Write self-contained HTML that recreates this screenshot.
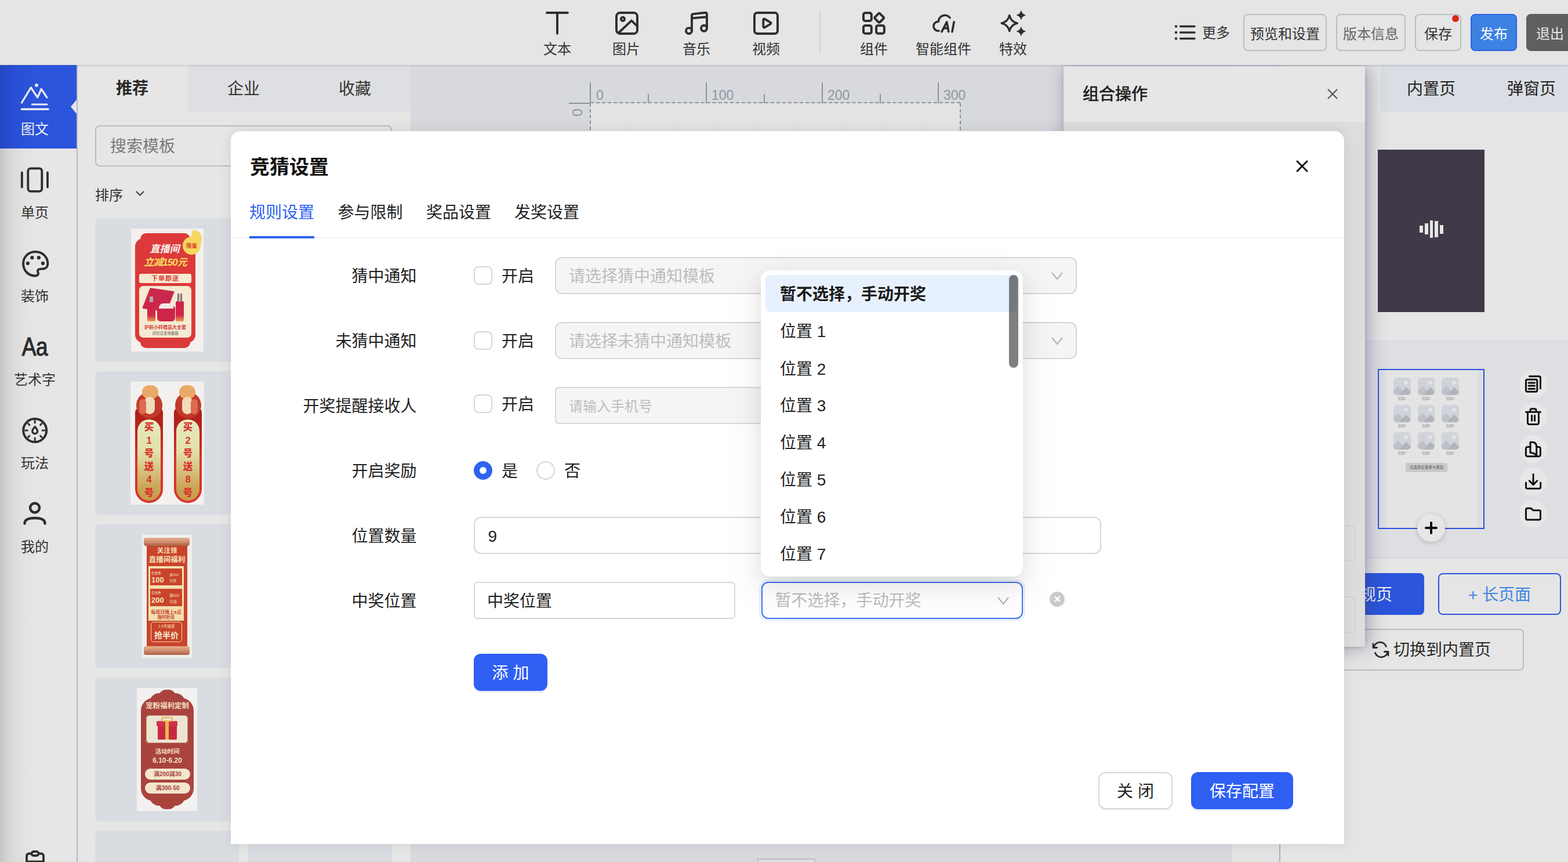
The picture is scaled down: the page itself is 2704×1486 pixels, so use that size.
<!DOCTYPE html><html lang="zh-CN"><head>
<meta charset="utf-8">
<title>竞猜设置</title>
<style>
*{box-sizing:border-box;margin:0;padding:0}
html,body{width:2704px;height:1486px;overflow:hidden;background:#e5e5e5}
body{position:relative;font-family:"Liberation Sans","Noto Sans CJK SC",sans-serif;color:#333;font-size:24px}
.a{position:absolute;white-space:nowrap}
.c{text-align:center}
svg{position:absolute;overflow:visible}
.ic{fill:none;stroke:#2e2e2e;stroke-width:3.9;stroke-linecap:round;stroke-linejoin:round}

/* ---------- top bar ---------- */
#top{left:0;top:0;width:2704px;height:112px;background:#e5e5e5;z-index:5;box-shadow:0 1px 3px rgba(90,100,120,.32)}
.tl{top:69px;width:160px;height:32px;line-height:32px;font-size:24px;color:#333;text-align:center}
.tb{top:24px;height:64px;line-height:66px;border:2px solid #b9bec6;border-radius:8px;font-size:24px;text-align:center;color:#333}

/* ---------- sidebar ---------- */
#side{left:0;top:112px;width:132px;height:1374px;background:linear-gradient(90deg,#c6c6c6 0,#d3d3d3 12px,#dddddd 28px,#e3e3e3 46px,#e6e6e6 66px)}
#sideline{left:132px;top:112px;width:2px;height:1374px;background:#b3b8c2}
.sl{left:0;width:120px;height:32px;line-height:32px;margin-top:1px;font-size:24px;text-align:center;color:#333}

/* ---------- template panel ---------- */
#tpl{left:134px;top:112px;width:574px;height:1374px;background:#e6e6e6}
.card{width:248px;height:248px;background:#d9dde2;border-radius:7px}

/* ---------- canvas ---------- */
#cv{left:708px;top:112px;width:1646px;height:1374px;background:#d8d9de}

/* ---------- right panel ---------- */
#rp{left:2354px;top:112px;width:350px;height:1374px;background:#e5e5e5}
.rb{width:48px;height:48px;border-radius:24px;background:#e7e7e7}
.ri{fill:none;stroke:#111;stroke-width:3;stroke-linecap:round;stroke-linejoin:round}

/* ---------- modal ---------- */
#modal{left:398px;top:226px;width:1920px;height:1229px;background:#fff;border-radius:16px 16px 0 0;z-index:20;
 box-shadow:0 -1px 26px rgba(0,0,0,.075),0 0 8px rgba(0,0,0,.03)}
.lb{left:0;width:320px;height:40px;line-height:40px;text-align:right;font-size:28px;color:#1f1f1f;margin-top:1.500px;margin-left:.5px}
.t28{font-size:28px;height:40px;line-height:40px;color:#1f1f1f;margin-top:1.500px}
.cb{width:32px;height:32px;border:2px solid #d6d6d6;border-radius:8px;background:#fff}
.sel{height:63px;border:2px solid #d7d7d7;border-radius:12px;background:#f5f5f5}
.ph{font-size:28px;height:40px;line-height:40px;color:#bdbdbd;margin-top:1.500px}
.chev{fill:none;stroke:#b4b4b4;stroke-width:2.2;stroke-linecap:butt;stroke-linejoin:miter}

/* ---------- dropdown ---------- */
#dd{left:1312px;top:466px;width:452px;height:528px;background:#fff;border-radius:16px;z-index:30;
 box-shadow:0 12px 32px 0 rgba(0,0,0,.08),0 6px 12px -8px rgba(0,0,0,.12),0 18px 56px 16px rgba(0,0,0,.05)}
.di{left:33px;height:40px;line-height:40px;font-size:28px;color:#1f1f1f;margin-top:2px}
</style>
</head>
<body>

<!-- ================= TOP BAR ================= -->
<div id="top" class="a">
  <!-- 文本 -->
  <svg class="ic" style="left:941px;top:20px" width="40" height="40" viewBox="0 0 40 40"><path d="M2 2h36M20 2v35.800"></path></svg>
  <div class="a tl" style="left: 881px; color: rgb(51,51,51);">文本</div>
  <!-- 图片 -->
  <svg class="ic" style="left:1061px;top:20px" width="40" height="40" viewBox="0 0 40 40"><rect x="2" y="2" width="36" height="36" rx="6"></rect><circle cx="13" cy="12.900" r="3.100"></circle><path d="M5.800 36.500L28 15.600l10 9.600"></path></svg>
  <div class="a tl" style="left: 1000px; color: rgb(51,51,51);">图片</div>
  <!-- 音乐 -->
  <svg class="ic" style="left:1181px;top:20px" width="40" height="40" viewBox="0 0 40 40"><path d="M12 33V6.700a2.600 2.600 0 0 1 2.300-2.600L35.300 1.800A2.500 2.500 0 0 1 38 4.300V28.800M12.500 11.400L37.500 9.300"></path><circle cx="7" cy="33.100" r="5"></circle><circle cx="33" cy="28.800" r="5"></circle></svg>
  <div class="a tl" style="left: 1121px; color: rgb(51,51,51);">音乐</div>
  <!-- 视频 -->
  <svg class="ic" style="left:1299px;top:20px" width="44" height="40" viewBox="0 0 44 40"><rect x="2" y="2" width="40" height="36" rx="5"></rect><path d="M17.300 14.200a1.600 1.600 0 0 1 2.400-1.400l10 5.800a1.600 1.600 0 0 1 0 2.800l-10 5.800a1.600 1.600 0 0 1-2.400-1.400z"></path></svg>
  <div class="a tl" style="left: 1241px; color: rgb(51,51,51);">视频</div>
  <div class="a" style="left:1413px;top:20px;width:2px;height:72px;background:#d2d2d2"></div>
  <!-- 组件 -->
  <svg class="ic" style="left:1487px;top:20px;stroke-width:4" width="40" height="40" viewBox="0 0 40 40"><rect x="2" y="2.200" width="13.800" height="13.800" rx="3"></rect><rect x="2" y="24" width="13.800" height="13.800" rx="3"></rect><rect x="24.100" y="24" width="13.800" height="13.800" rx="3"></rect><path d="M27.800 3.600a2 2 0 0 1 2.800 0l5.800 5.800a2 2 0 0 1 0 2.800l-5.800 5.800a2 2 0 0 1-2.800 0l-5.800-5.800a2 2 0 0 1 0-2.800z"></path></svg>
  <div class="a tl" style="left: 1427px; color: rgb(51,51,51);">组件</div>
  <!-- 智能组件 -->
  <svg class="ic" style="left:1607px;top:20px;stroke-width:3.600" width="42" height="40" viewBox="0 0 42 40"><path d="M12 33.200h-1.600a8 8 0 0 1 1-16A11 11 0 0 1 31 10.500"></path><path d="M17 34.700l8.700-16.800 3.100 16.800M20.500 28.600h7.300M38.200 17.900L35 34.700"></path></svg>
  <div class="a tl" style="left: 1547px; color: rgb(51,51,51);">智能组件</div>
  <!-- 特效 -->
  <svg style="left:1726px;top:18px" width="44" height="44" viewBox="0 0 44 44"><path d="M14.800 8.400Q17.300 19.500 28.400 22 17.300 24.500 14.800 35.600 12.300 24.500 1.200 22 12.300 19.500 14.800 8.400z" fill="none" stroke="#2e2e2e" stroke-width="3.400" stroke-linejoin="round"></path><path d="M34.900 .7Q36.500 6.500 42.300 8.100 36.500 9.700 34.900 15.500 33.300 9.700 27.500 8.100 33.300 6.500 34.900 .7zM34.900 28.700Q36.500 34.500 42.300 36.100 36.500 37.700 34.900 43.500 33.300 37.700 27.500 36.100 33.300 34.500 34.900 28.700z" fill="#2e2e2e" stroke="#2e2e2e" stroke-width="1" stroke-linejoin="round"></path></svg>
  <div class="a tl" style="left: 1667px; color: rgb(51,51,51);">特效</div>
  <!-- 更多 -->
  <svg style="left:2026px;top:43px" width="36" height="26" viewBox="0 0 36 26" fill="none" stroke="#2e2e2e" stroke-width="3.400" stroke-linecap="round"><path d="M9.500 2.500H34M9.500 13H34M9.500 23.500H34"></path><path d="M2 2.500h.1M2 13h.1M2 23.500h.1" stroke-width="4.400"></path></svg>
  <div class="a" style="left: 2073px; top: 41px; height: 32px; line-height: 32px; font-size: 24px; color: rgb(51,51,51);">更多</div>
  <div class="a tb" style="left: 2144px; width: 144px; color: rgb(51,51,51);">预览和设置</div>
  <div class="a tb" style="left: 2304px; width: 120px; color: rgb(102,102,102);">版本信息</div>
  <div class="a tb" style="left: 2440px; width: 80px; color: rgb(51,51,51);">保存</div>
  <div class="a" style="left:2504px;top:26px;width:12px;height:12px;border-radius:6px;background:#d9261c"></div>
  <div class="a tb" style="left: 2536px; width: 80px; background: rgb(61, 130, 226); border-color: rgb(43, 99, 230); color: rgb(255,255,255);">发布</div>
  <div class="a tb" style="left: 2632px; width: 90px; background: rgb(95, 95, 95); border-color: rgb(95, 95, 95); color: rgb(232,232,232); text-align: left; padding-left: 15px;">退出</div>
</div>

<!-- ================= SIDEBAR ================= -->
<div id="side" class="a">
  <div class="a" style="left:0;top:0;width:132px;height:144px;background:linear-gradient(90deg,#2447c2 0,#2850d6 26px,#2a54dc 60px)"></div>
  <div class="a" style="left:122px;top:60px;width:0;height:0;border-top:12px solid transparent;border-bottom:12px solid transparent;border-right:10px solid #e6e6e6"></div>
  <!-- 图文 -->
  <svg style="left:0;top:0" width="132" height="144" viewBox="0 0 132 144" fill="none" stroke="#ececec" stroke-width="3.2" stroke-linecap="round" stroke-linejoin="round"><path d="M37.500 65L53.300 38.800 64.700 56 71.200 41.500 81 56M55.500 68H81"></path><path d="M37.500 76.300H83" stroke-width="3.600"></path><circle cx="63" cy="35" r="2.900" fill="#ececec" stroke="none"></circle></svg>
  <div class="a sl" style="top: 94px; color: rgb(240,240,240);">图文</div>
  <!-- 单页 -->
  <svg class="ic" style="left:0;top:144px;stroke-width:3.800" width="132" height="144" viewBox="0 0 132 144"><rect x="48.300" y="34.400" width="24" height="39.400" rx="4.500"></rect><path d="M37.800 41.500v25M82 41.500v25"></path></svg>
  <div class="a sl" style="top: 238px; color: rgb(51,51,51);">单页</div>
  <!-- 装饰 -->
  <svg class="ic" style="left:38px;top:320px;stroke-width:3.800" width="46" height="46" viewBox="0 0 44 44"><path d="M22 1.900C10.500 1.900 2 10.500 2 21.500 2 33 10.500 41.600 21.500 41.600c3.600 0 6-2 5-5.100-1.200-3-1-5.500 2.500-6l5-.3c5.500-.2 8.400-4.200 8.400-8.700C42.400 10.500 33.500 1.900 22 1.900z"></path><circle cx="9.500" cy="21" r="3" fill="#2e2e2e" stroke="none"></circle><circle cx="16.600" cy="11.700" r="3" fill="#2e2e2e" stroke="none"></circle><circle cx="27.600" cy="11.700" r="3" fill="#2e2e2e" stroke="none"></circle><circle cx="34.400" cy="21" r="3" fill="#2e2e2e" stroke="none"></circle></svg>
  <div class="a sl" style="top: 382px; color: rgb(51,51,51);">装饰</div>
  <!-- 艺术字 -->
  <div class="a" style="left:10px;top:458px;width:100px;height:56px;line-height:56px;font-size:44.500px;font-weight:normal;-webkit-text-stroke:1.200px #2b2b2b;color:#2b2b2b;text-align:center;transform:scaleX(.83);letter-spacing:-.5px">Aa</div>
  <div class="a sl" style="top: 526px; color: rgb(51,51,51);">艺术字</div>
  <!-- 玩法 -->
  <svg class="ic" style="left:38px;top:608px;stroke-width:4" width="44" height="44" viewBox="0 0 44 44"><circle cx="22.200" cy="22" r="20"></circle><path d="M22.200 5.500v3.500M22.200 35v3.500M5.700 22h3.500M35.200 22h3.500M10.500 10.300l2.300 2.300M31.600 31.400l2.300 2.300M33.900 10.300l-2.300 2.300M12.800 31.400l-2.300 2.300" stroke-width="3"></path><path d="M22.200 15.500c2.600 3 4.400 5.200 4.400 7.800a4.400 4.400 0 0 1-8.800 0c0-2.600 1.800-4.800 4.400-7.800z" stroke-width="3.400"></path></svg>
  <div class="a sl" style="top: 670px; color: rgb(51,51,51);">玩法</div>
  <!-- 我的 -->
  <svg class="ic" style="left:38px;top:752px;stroke-width:4.400" width="44" height="44" viewBox="0 0 44 44"><circle cx="22" cy="11.500" r="8"></circle><path d="M4.500 38.500c0-5.500 5-9.500 17.500-9.500s17.500 4 17.500 9.500"></path></svg>
  <div class="a sl" style="top: 814px; color: rgb(51,51,51);">我的</div>
  <!-- bottom clipboard -->
  <svg class="ic" style="left:43.500px;top:1354px;stroke-width:3.800" width="33" height="40" viewBox="0 0 33 40"><rect x="2" y="5.500" width="29" height="34" rx="4"></rect><rect x="10.500" y="2" width="12" height="7" rx="3.500" fill="#e6e6e6"></rect><path d="M2 19h29" stroke-width="3"></path></svg>
</div>
<div id="sideline" class="a"></div>

<!-- ================= TEMPLATE PANEL ================= -->
<div class="a" style="left:134px;top:112px;width:574px;height:1374px;background:#e6e6e6"></div>
<div class="a" style="left:324px;top:112px;width:384px;height:80px;background:#dedfe2"></div>
<div class="a c" style="left: 148px; top: 133px; width: 160px; height: 40px; line-height: 40px; font-size: 28px; font-weight: bold; color: rgb(42,42,42);">推荐</div>
<div class="a c" style="left: 340px; top: 134px; width: 160px; height: 40px; line-height: 40px; font-size: 28px; color: rgb(51,51,51);">企业</div>
<div class="a c" style="left: 532px; top: 134px; width: 160px; height: 40px; line-height: 40px; font-size: 28px; color: rgb(51,51,51);">收藏</div>
<div class="a" style="left:164px;top:216px;width:512px;height:71px;border:2px solid #b7bcc5;border-radius:8px"></div>
<div class="a" style="left: 190px; top: 233px; height: 40px; line-height: 40px; font-size: 28px; color: rgb(122,122,122);">搜索模板</div>
<div class="a" style="left: 164px; top: 321px; height: 32px; line-height: 32px; font-size: 24px; color: rgb(51,51,51);">排序</div>
<svg style="left:234px;top:329px" width="15" height="10" viewBox="0 0 15 10" fill="none" stroke="#444" stroke-width="2.200" stroke-linecap="round" stroke-linejoin="round"><path d="M1.500 1.500l6 6 6-6"></path></svg>

<!-- card 1 -->
<div class="a card" style="left:164px;top:376px"></div>
<div class="a card" style="left:428px;top:376px"></div>
<div class="a" style="left:226px;top:394px;width:125px;height:212px;background:#f3f0ee"></div>
<div class="a" style="left:233px;top:411px;width:104px;height:180px;background:#dc3a3a;border-radius:14px"></div>
<div class="a" style="left:242px;top:402px;width:86px;height:198px;background:#dc3a3a;border-radius:10px"></div>
<div class="a" style="left:315px;top:408px;width:31px;height:31px;border-radius:16px;background:#f6d65c"></div>
<div class="a" style="left:329px;top:398px;width:19px;height:26px;border-radius:3px 14px 6px 12px;background:#f6d65c;transform:rotate(14deg)"></div>
<div class="a c" style="left: 315px; top: 417px; width: 31px; height: 14px; line-height: 14px; font-size: 9.5px; font-weight: bold; color: rgb(216,68,44);">限量</div>
<div class="a c" style="left: 240px; top: 420px; width: 88px; height: 20px; line-height: 20px; font-size: 17px; font-weight: bold; font-style: italic; color: rgb(251,243,240);">直播间</div>
<div class="a c" style="left: 236px; top: 443px; width: 98px; height: 20px; line-height: 20px; font-size: 17px; font-weight: bold; font-style: italic; color: rgb(248,223,98); letter-spacing: -1px;">立减150元</div>
<div class="a c" style="left: 240px; top: 472px; width: 90px; height: 16px; line-height: 16px; font-size: 11px; font-weight: bold; color: rgb(214,60,52); background: rgb(246, 234, 210); border-radius: 3px; letter-spacing: 1px;">下单即送</div>
<div class="a" style="left:240px;top:493px;width:90px;height:89px;background:#f5ead3;border-radius:7px"></div>
<div class="a" style="left:251px;top:499px;width:44px;height:36px;background:#c9284c;transform:skewX(-14deg) rotate(8deg);border-radius:2px"></div>
<div class="a" style="left:254px;top:520px;width:14px;height:34px;background:linear-gradient(#d02048,#d02848 70%,#e8a050);border-radius:3px 3px 2px 2px"></div>
<div class="a" style="left:258px;top:511px;width:6px;height:10px;background:#b0a8a8"></div>
<div class="a" style="left:271px;top:528px;width:31px;height:26px;background:#cf2446;border-radius:4px 4px 6px 6px"></div>
<div class="a" style="left:274px;top:523px;width:25px;height:9px;background:#f3e8e8;border-radius:8px 8px 0 0"></div>
<div class="a" style="left:303px;top:519px;width:14px;height:35px;background:linear-gradient(#d02048,#d02848 70%,#e8a050);border-radius:3px 3px 2px 2px"></div>
<div class="a" style="left:306px;top:506px;width:8px;height:14px;background:linear-gradient(90deg,#5a4a4a,#d8d0d0,#5a4a4a)"></div>
<div class="a c" style="left: 240px; top: 559px; width: 90px; height: 11px; line-height: 11px; font-size: 8px; font-weight: bold; color: rgb(208,58,52);">护肤小样赠品大全套</div>
<div class="a c" style="left: 240px; top: 570px; width: 90px; height: 9px; line-height: 9px; font-size: 6.5px; color: rgb(106,94,88);">详情请咨询客服</div>

<!-- card 2 -->
<div class="a card" style="left:164px;top:640px"></div>
<div class="a card" style="left:428px;top:640px"></div>
<div class="a" style="left:225px;top:658px;width:127px;height:212px;background:#f3f1ef"></div>
<div class="a" style="left:233px;top:703px;width:48px;height:164px;background:linear-gradient(#ad2018 0,#b82419 25%,#d8352c 55%,#d8352c);border-radius:8px 8px 24px 24px"></div>
<div class="a" style="left:235px;top:676px;width:45px;height:45px;border-radius:23px;background:#c23a2b"></div>
<div class="a" style="left:237px;top:723px;width:40px;height:140px;background:linear-gradient(#e6eac0 0,#e2dfa8 40%,#cba455 85%,#c89a4c);border-radius:20px"></div>
<div class="a" style="left:245px;top:664px;width:28px;height:24px;border-radius:12px;background:#e9a968"></div>
<div class="a" style="left:249px;top:684px;width:18px;height:30px;border-radius:9px;background:#f0dcb8"></div>
<div class="a" style="left:240px;top:688px;width:12px;height:26px;border-radius:6px;background:#dd6a50"></div>
<div class="a c" style="left: 247px; top: 725px; width: 20px; line-height: 22.5px; font-size: 16.5px; font-weight: 900; color: rgb(216,50,44); white-space: normal; word-break: break-all;">买1号送4号</div>
<div class="a" style="left:300px;top:703px;width:48px;height:164px;background:linear-gradient(#ad2018 0,#b82419 25%,#d8352c 55%,#d8352c);border-radius:8px 8px 24px 24px"></div>
<div class="a" style="left:302px;top:676px;width:45px;height:45px;border-radius:23px;background:#c23a2b"></div>
<div class="a" style="left:304px;top:723px;width:40px;height:140px;background:linear-gradient(#e6eac0 0,#e2dfa8 40%,#cba455 85%,#c89a4c);border-radius:20px"></div>
<div class="a" style="left:309px;top:664px;width:28px;height:24px;border-radius:12px;background:#e9a968"></div>
<div class="a" style="left:314px;top:684px;width:18px;height:30px;border-radius:9px;background:#f0dcb8"></div>
<div class="a" style="left:329px;top:688px;width:12px;height:26px;border-radius:6px;background:#dd6a50"></div>
<div class="a c" style="left: 314px; top: 725px; width: 20px; line-height: 22.5px; font-size: 16.5px; font-weight: 900; color: rgb(216,50,44); white-space: normal; word-break: break-all;">买2号送8号</div>

<!-- card 3 -->
<div class="a card" style="left:164px;top:904px"></div>
<div class="a card" style="left:428px;top:904px"></div>
<div class="a" style="left:245px;top:922px;width:86px;height:212px;background:#f2efec"></div>
<div class="a" style="left:253px;top:938px;width:70px;height:179px;background:#c9442b"></div>
<div class="a" style="left:248px;top:927px;width:79px;height:14px;border-radius:4px;background:linear-gradient(#e2b090,#d09070 50%,#a86040)"></div>
<div class="a" style="left:248px;top:1114px;width:79px;height:15px;border-radius:4px;background:linear-gradient(#e2b090,#d09070 50%,#a86040)"></div>
<div class="a c" style="left: 253px; top: 942px; width: 70px; height: 15px; line-height: 15px; font-size: 11.5px; font-weight: bold; color: rgb(245,228,188);">关注领</div>
<div class="a c" style="left: 250px; top: 957px; width: 76px; height: 16px; line-height: 16px; font-size: 12.5px; font-weight: bold; color: rgb(245,228,188);">直播间福利</div>
<div class="a" style="left:256px;top:976px;width:61px;height:94px;background:#f3dfb0"></div>
<div class="a" style="left:259px;top:980px;width:55px;height:29px;background:#c9442b"></div>
<div class="a" style="left:259px;top:1015px;width:55px;height:30px;background:#c9442b"></div>
<div class="a" style="left: 261px; top: 984px; height: 8px; line-height: 8px; font-size: 5.5px; color: rgb(243,223,176);">优惠券</div>
<div class="a" style="left:261px;top:992px;height:15px;line-height:15px;font-size:13px;font-weight:bold;color:#f6e6c0">100</div>
<div class="a" style="left: 292px; top: 986px; width: 20px; line-height: 10px; font-size: 6px; color: rgb(243,223,176); white-space: normal;">满300 可用</div>
<div class="a" style="left: 261px; top: 1018px; height: 8px; line-height: 8px; font-size: 5.5px; color: rgb(243,223,176);">优惠券</div>
<div class="a" style="left:261px;top:1027px;height:15px;line-height:15px;font-size:13px;font-weight:bold;color:#f6e6c0">200</div>
<div class="a" style="left: 292px; top: 1021px; width: 22px; line-height: 11px; font-size: 6.5px; color: rgb(243,223,176); white-space: normal;">满500 可用</div>
<div class="a c" style="left: 256px; top: 1051px; width: 61px; height: 10px; line-height: 10px; font-size: 8px; font-weight: bold; color: rgb(201,68,43);">每周日晚上8点</div>
<div class="a c" style="left: 256px; top: 1060px; width: 61px; height: 10px; line-height: 10px; font-size: 7.5px; font-weight: bold; color: rgb(201,68,43);">限时秒杀</div>
<div class="a" style="left:260px;top:1072px;width:54px;height:35px;background:#c9442b;border:1px solid #f0d8a8;border-radius:5px;box-shadow:0 0 0 1.500px #c9442b"></div>
<div class="a c" style="left: 260px; top: 1075px; width: 54px; height: 10px; line-height: 10px; font-size: 6.5px; color: rgb(243,223,176);">1-5号链接</div>
<div class="a c" style="left: 260px; top: 1086px; width: 54px; height: 18px; line-height: 18px; font-size: 14px; font-weight: bold; color: rgb(248,236,208);">抢半价</div>

<!-- card 4 -->
<div class="a card" style="left:164px;top:1168px"></div>
<div class="a card" style="left:428px;top:1168px"></div>
<div class="a" style="left:236px;top:1186px;width:104px;height:212px;background:#f2f0f0"></div>
<div class="a" style="left:243px;top:1203px;width:91px;height:178px;background:#a9443d;border-radius:22px"></div>
<div class="a" style="left:258px;top:1195px;width:61px;height:194px;background:#a9443d;border-radius:16px"></div>
<div class="a" style="left:274px;top:1189px;width:29px;height:206px;background:#a9443d;border-radius:12px"></div>
<div class="a c" style="left: 243px; top: 1208px; width: 91px; height: 18px; line-height: 18px; font-size: 12.5px; font-weight: bold; color: rgb(242,223,194);">宠粉福利定制</div>
<div class="a" style="left:251px;top:1232px;width:74px;height:50px;background:#ece5d2;border-radius:7px;box-shadow:inset 0 0 0 1.500px #a9443d,inset 0 0 0 2.500px #ece5d2"></div>
<div class="a" style="left:272px;top:1246px;width:33px;height:29px;background:#c62a40;border-radius:2px"></div>
<div class="a" style="left:270px;top:1243px;width:36px;height:9px;background:#d0304a;border-radius:2px"></div>
<div class="a" style="left:285px;top:1243px;width:6px;height:32px;background:#e8b850"></div>
<div class="a" style="left:278px;top:1236px;width:20px;height:8px;border-radius:5px;border:2px solid #e8b850"></div>
<div class="a c" style="left: 243px; top: 1288px; width: 91px; height: 14px; line-height: 14px; font-size: 10.5px; font-weight: bold; color: rgb(242,223,194);">活动时间</div>
<div class="a c" style="left:243px;top:1303px;width:91px;height:16px;line-height:16px;font-size:12px;font-weight:bold;color:#f2dfc2">6.10-6.20</div>
<div class="a c" style="left: 250px; top: 1325px; width: 78px; height: 19px; line-height: 19px; border-radius: 10px; background: rgb(243, 230, 205); font-size: 10px; font-weight: bold; color: rgb(169,68,61);">满200减30</div>
<div class="a c" style="left: 250px; top: 1349px; width: 78px; height: 19px; line-height: 19px; border-radius: 10px; background: rgb(243, 230, 205); font-size: 10px; font-weight: bold; color: rgb(169,68,61);">满300-50</div>

<!-- card 5 -->
<div class="a card" style="left:164px;top:1432px"></div>
<div class="a card" style="left:428px;top:1432px"></div>
<!--TPL_END-->
<!-- ================= CANVAS ================= -->
<div class="a" style="left:708px;top:112px;width:1500px;height:1374px;background:#d8d9de"></div>
<div class="a" style="left:1018px;top:178px;width:638px;height:1200px;background:#e4e4e4"></div>
<div class="a" style="left:1088px;top:178px;width:1px;height:1200px;background:#dedede"></div><div class="a" style="left:1160px;top:178px;width:1px;height:1200px;background:#dedede"></div><div class="a" style="left:1232px;top:178px;width:1px;height:1200px;background:#dedede"></div><div class="a" style="left:1305px;top:178px;width:1px;height:1200px;background:#dedede"></div><div class="a" style="left:1377px;top:178px;width:1px;height:1200px;background:#dedede"></div><div class="a" style="left:1449px;top:178px;width:1px;height:1200px;background:#dedede"></div><div class="a" style="left:1521px;top:178px;width:1px;height:1200px;background:#dedede"></div><div class="a" style="left:1593px;top:178px;width:1px;height:1200px;background:#dedede"></div>
<div class="a" style="left:981px;top:177px;width:37px;height:2px;background:#8b9399"></div>
<div class="a" style="left:1018px;top:176px;width:638px;height:0;border-top:2px dashed #8b9399"></div>
<div class="a" style="left:1017px;top:178px;width:0;height:1200px;border-left:2px dashed #8b9399"></div>
<div class="a" style="left:1655px;top:178px;width:0;height:1200px;border-left:2px dashed #8b9399"></div>
<div class="a" style="left:1017px;top:142px;width:2px;height:36px;background:#8b9399"></div><div class="a" style="left:1217px;top:142px;width:2px;height:36px;background:#8b9399"></div><div class="a" style="left:1417px;top:142px;width:2px;height:36px;background:#8b9399"></div><div class="a" style="left:1617px;top:142px;width:2px;height:36px;background:#8b9399"></div><div class="a" style="left:1117px;top:162px;width:2px;height:16px;background:#8b9399"></div><div class="a" style="left:1317px;top:162px;width:2px;height:16px;background:#8b9399"></div><div class="a" style="left:1517px;top:162px;width:2px;height:16px;background:#8b9399"></div><div class="a" style="left:1028px;top:150px;height:28px;line-height:28px;font-size:23px;color:#8f979d">0</div><div class="a" style="left:1227px;top:150px;height:28px;line-height:28px;font-size:23px;color:#8f979d">100</div><div class="a" style="left:1427px;top:150px;height:28px;line-height:28px;font-size:23px;color:#8f979d">200</div><div class="a" style="left:1627px;top:150px;height:28px;line-height:28px;font-size:23px;color:#8f979d">300</div>
<div class="a" style="left:982px;top:180px;width:28px;height:28px;line-height:28px;font-size:24.500px;color:#8f979d;transform:rotate(-90deg);text-align:center">0</div>
<div class="a" style="left:2125px;top:112px;width:81px;height:1374px;background:#e3e3e3"></div>
<div class="a" style="left:1306px;top:1480px;width:100px;height:40px;border:2px solid #b9bec6;background:#dedfe3"></div>
<!--CANVAS_END-->
<!-- ================= RIGHT PANEL ================= -->
<div class="a" style="left:2206px;top:112px;width:2px;height:1374px;background:#a9b0bd"></div>
<div class="a" style="left:2208px;top:112px;width:496px;height:1374px;background:#e5e5e5"></div>
<div class="a" style="left:2381px;top:112px;width:323px;height:80px;background:#dadde3"></div>
<div class="a c" style="left: 2388px; top: 134px; width: 160px; height: 40px; line-height: 40px; font-size: 28px; color: rgb(34,34,34);">内置页</div>
<div class="a c" style="left: 2561px; top: 134px; width: 160px; height: 40px; line-height: 40px; font-size: 28px; color: rgb(34,34,34);">弹窗页</div>
<div class="a" style="left:2376px;top:258px;width:184px;height:280px;background:#403a48"></div>
<div class="a" style="left:2448.300px;top:388.500px;width:5.600px;height:12.400px;background:#e6e6e6"></div>
<div class="a" style="left:2456.800px;top:385.300px;width:6px;height:18.400px;background:#e6e6e6"></div>
<div class="a" style="left:2465.600px;top:380px;width:5.600px;height:30px;background:#e6e6e6"></div>
<div class="a" style="left:2474.400px;top:380.700px;width:5.600px;height:28.600px;background:#e6e6e6"></div>
<div class="a" style="left:2483.200px;top:387.800px;width:5.600px;height:14.800px;background:#e6e6e6"></div>
<div class="a" style="left:2208px;top:584px;width:496px;height:379px;background:#dedfe3;border-top:2px solid #e9e9eb;border-bottom:2px solid #d3d6dc"></div>
<div class="a" style="left:2376px;top:636px;width:184px;height:276px;background:#dddee2;border:2px solid #2a50e0"></div>
<div class="a" style="left:2389px;top:638px;width:158px;height:272px;background:#e4e4e4"></div>
<div class="a" style="left:2403px;top:651px;width:29.500px;height:29.500px;border-radius:6px;background:#d1d3da;overflow:hidden"><div class="a" style="left:-3px;top:19px;width:22px;height:22px;background:#bfc1c9;transform:rotate(45deg)"></div><div class="a" style="left:12px;top:21px;width:20px;height:20px;background:#b2b4bc;transform:rotate(45deg)"></div><div class="a" style="left:18px;top:5px;width:7px;height:7px;border-radius:4px;background:#e2e3e7"></div></div><div class="a c" style="left: 2403px; top: 683px; width: 29.5px; height: 8px; line-height: 8px; font-size: 5.5px; color: rgb(138,138,138);">位置1</div><div class="a" style="left:2444.5px;top:651px;width:29.500px;height:29.500px;border-radius:6px;background:#d1d3da;overflow:hidden"><div class="a" style="left:-3px;top:19px;width:22px;height:22px;background:#bfc1c9;transform:rotate(45deg)"></div><div class="a" style="left:12px;top:21px;width:20px;height:20px;background:#b2b4bc;transform:rotate(45deg)"></div><div class="a" style="left:18px;top:5px;width:7px;height:7px;border-radius:4px;background:#e2e3e7"></div></div><div class="a c" style="left: 2444.5px; top: 683px; width: 29.5px; height: 8px; line-height: 8px; font-size: 5.5px; color: rgb(138,138,138);">位置2</div><div class="a" style="left:2486px;top:651px;width:29.500px;height:29.500px;border-radius:6px;background:#d1d3da;overflow:hidden"><div class="a" style="left:-3px;top:19px;width:22px;height:22px;background:#bfc1c9;transform:rotate(45deg)"></div><div class="a" style="left:12px;top:21px;width:20px;height:20px;background:#b2b4bc;transform:rotate(45deg)"></div><div class="a" style="left:18px;top:5px;width:7px;height:7px;border-radius:4px;background:#e2e3e7"></div></div><div class="a c" style="left: 2486px; top: 683px; width: 29.5px; height: 8px; line-height: 8px; font-size: 5.5px; color: rgb(138,138,138);">位置3</div><div class="a" style="left:2403px;top:698px;width:29.500px;height:29.500px;border-radius:6px;background:#d1d3da;overflow:hidden"><div class="a" style="left:-3px;top:19px;width:22px;height:22px;background:#bfc1c9;transform:rotate(45deg)"></div><div class="a" style="left:12px;top:21px;width:20px;height:20px;background:#b2b4bc;transform:rotate(45deg)"></div><div class="a" style="left:18px;top:5px;width:7px;height:7px;border-radius:4px;background:#e2e3e7"></div></div><div class="a c" style="left: 2403px; top: 730px; width: 29.5px; height: 8px; line-height: 8px; font-size: 5.5px; color: rgb(138,138,138);">位置4</div><div class="a" style="left:2444.5px;top:698px;width:29.500px;height:29.500px;border-radius:6px;background:#d1d3da;overflow:hidden"><div class="a" style="left:-3px;top:19px;width:22px;height:22px;background:#bfc1c9;transform:rotate(45deg)"></div><div class="a" style="left:12px;top:21px;width:20px;height:20px;background:#b2b4bc;transform:rotate(45deg)"></div><div class="a" style="left:18px;top:5px;width:7px;height:7px;border-radius:4px;background:#e2e3e7"></div></div><div class="a c" style="left: 2444.5px; top: 730px; width: 29.5px; height: 8px; line-height: 8px; font-size: 5.5px; color: rgb(138,138,138);">位置5</div><div class="a" style="left:2486px;top:698px;width:29.500px;height:29.500px;border-radius:6px;background:#d1d3da;overflow:hidden"><div class="a" style="left:-3px;top:19px;width:22px;height:22px;background:#bfc1c9;transform:rotate(45deg)"></div><div class="a" style="left:12px;top:21px;width:20px;height:20px;background:#b2b4bc;transform:rotate(45deg)"></div><div class="a" style="left:18px;top:5px;width:7px;height:7px;border-radius:4px;background:#e2e3e7"></div></div><div class="a c" style="left: 2486px; top: 730px; width: 29.5px; height: 8px; line-height: 8px; font-size: 5.5px; color: rgb(138,138,138);">位置6</div><div class="a" style="left:2403px;top:745px;width:29.500px;height:29.500px;border-radius:6px;background:#d1d3da;overflow:hidden"><div class="a" style="left:-3px;top:19px;width:22px;height:22px;background:#bfc1c9;transform:rotate(45deg)"></div><div class="a" style="left:12px;top:21px;width:20px;height:20px;background:#b2b4bc;transform:rotate(45deg)"></div><div class="a" style="left:18px;top:5px;width:7px;height:7px;border-radius:4px;background:#e2e3e7"></div></div><div class="a c" style="left: 2403px; top: 777px; width: 29.5px; height: 8px; line-height: 8px; font-size: 5.5px; color: rgb(138,138,138);">位置7</div><div class="a" style="left:2444.5px;top:745px;width:29.500px;height:29.500px;border-radius:6px;background:#d1d3da;overflow:hidden"><div class="a" style="left:-3px;top:19px;width:22px;height:22px;background:#bfc1c9;transform:rotate(45deg)"></div><div class="a" style="left:12px;top:21px;width:20px;height:20px;background:#b2b4bc;transform:rotate(45deg)"></div><div class="a" style="left:18px;top:5px;width:7px;height:7px;border-radius:4px;background:#e2e3e7"></div></div><div class="a c" style="left: 2444.5px; top: 777px; width: 29.5px; height: 8px; line-height: 8px; font-size: 5.5px; color: rgb(138,138,138);">位置8</div><div class="a" style="left:2486px;top:745px;width:29.500px;height:29.500px;border-radius:6px;background:#d1d3da;overflow:hidden"><div class="a" style="left:-3px;top:19px;width:22px;height:22px;background:#bfc1c9;transform:rotate(45deg)"></div><div class="a" style="left:12px;top:21px;width:20px;height:20px;background:#b2b4bc;transform:rotate(45deg)"></div><div class="a" style="left:18px;top:5px;width:7px;height:7px;border-radius:4px;background:#e2e3e7"></div></div><div class="a c" style="left: 2486px; top: 777px; width: 29.5px; height: 8px; line-height: 8px; font-size: 5.5px; color: rgb(138,138,138);">位置9</div>
<div class="a c" style="left: 2424px; top: 798px; width: 72px; height: 16px; line-height: 16px; border-radius: 3px; background: rgb(201, 201, 201); font-size: 6.5px; color: rgb(85,85,85);">请选择位置参与竞猜</div>
<div class="a" style="left:2444px;top:886px;width:48px;height:48px;border-radius:24px;background:#e6e6e6;box-shadow:0 2px 8px rgba(0,0,0,.18)"></div>
<svg style="left:2457px;top:899px" width="22" height="22" viewBox="0 0 22 22" fill="none" stroke="#111" stroke-width="4" stroke-linecap="round"><path d="M11 2v18M2 11h18"></path></svg>
<div class="a rb" style="left:2620px;top:638px"></div><div class="a rb" style="left:2620px;top:694px"></div><div class="a rb" style="left:2620px;top:750px"></div><div class="a rb" style="left:2620px;top:806px"></div><div class="a rb" style="left:2620px;top:862px"></div>
<svg class="ri" style="left:2630px;top:648px" width="28" height="28" viewBox="0 0 28 28"><rect x="1.500" y="6.300" width="19.300" height="21" rx="2.500"></rect><path d="M7.500 .8h17a2 2 0 0 1 2 2v19M6 12h10.500M6 17h10.500M6 22.200h10.500"></path></svg>
<svg class="ri" style="left:2630px;top:704px" width="28" height="28" viewBox="0 0 28 28"><path d="M1.500 6.200h25M9 6V3.200a2.500 2.500 0 0 1 2.500-2.500h5A2.500 2.500 0 0 1 19 3.200V6M4.500 6.500v18.200a2.800 2.800 0 0 0 2.800 2.800h13.400a2.800 2.800 0 0 0 2.800-2.800V6.500M11.600 12.300v9M16.600 12.300v9"></path></svg>
<svg class="ri" style="left:2630px;top:760px" width="28" height="28" viewBox="0 0 28 28"><path d="M9 10.500H4.200a2.800 2.800 0 0 0-2.800 2.800v10.600a2.800 2.800 0 0 0 2.800 2.800h19.400a2.800 2.800 0 0 0 2.800-2.800V13.300a2.800 2.800 0 0 0-2.800-2.800H20"></path><path d="M9 20.500V2.300h3.200c5 0 7.500 3.200 7.500 8v15.500c-2.300-3.800-6-5.400-10.700-5.300z"></path></svg>
<svg class="ri" style="left:2630px;top:816px" width="28" height="28" viewBox="0 0 28 28"><path d="M14.100 1.500v17.500M7.300 12.800l6.800 6.800 6.800-6.800M1.500 16v8a2.300 2.300 0 0 0 2.300 2.300h20.600a2.300 2.300 0 0 0 2.300-2.300v-8"></path></svg>
<svg class="ri" style="left:2630px;top:872px" width="28" height="28" viewBox="0 0 28 28"><path d="M1.500 6.500A2.200 2.200 0 0 1 3.700 4.300h6.600l3.600 3.400h10.400a2.200 2.200 0 0 1 2.200 2.200v11.800a2.200 2.200 0 0 1-2.200 2.200H3.700a2.200 2.200 0 0 1-2.200-2.200z"></path></svg>
<div class="a c" style="left: 2262px; top: 988px; width: 194px; height: 72px; line-height: 76px; border-radius: 8px; background: rgb(42, 85, 220); color: rgb(240,240,240); font-size: 28px;">常规页</div>
<div class="a c" style="left: 2480px; top: 988px; width: 212px; height: 72px; line-height: 72px; border-radius: 8px; border: 2px solid rgb(42, 85, 220); color: rgb(61,133,224); font-size: 28px;">+ 长页面</div>
<div class="a" style="left:2262px;top:1084px;width:366px;height:72px;border-radius:8px;border:2px solid #b6bcc4"></div>
<svg style="left:2366px;top:1106px" width="30" height="28" viewBox="0 0 30 28" fill="none" stroke="#2a2a2a" stroke-width="2.800" stroke-linecap="round" stroke-linejoin="round"><path d="M2 4v6.500h6.500M28 24v-6.500h-6.500"></path><path d="M2.800 10.200A11.300 11.300 0 0 1 24.500 8.500M27.200 17.800A11.300 11.300 0 0 1 5.500 19.500"></path></svg>
<div class="a" style="left: 2403px; top: 1101px; height: 40px; line-height: 40px; font-size: 28px; color: rgb(42,42,42);">切换到内置页</div>
<!--RIGHT_END-->
<!-- ================= COMBO PANEL ================= -->
<div class="a" style="left:1834px;top:114px;width:520px;height:1001px;background:#dddddd;box-shadow:5px 2px 30px 0 rgba(60,60,105,.42),0 0 6px rgba(60,60,105,.18)"></div>
<div class="a" style="left:1834px;top:114px;width:520px;height:96px;background:#e6e6e6"></div>
<div class="a" style="left: 1867px; top: 143px; height: 40px; line-height: 40px; font-size: 28px; font-weight: normal; -webkit-text-stroke: 0.7px rgb(28,28,28); color: rgb(28,28,28);">组合操作</div>
<svg style="left:2289px;top:153px" width="18" height="18" viewBox="0 0 18 18" fill="none" stroke="#555" stroke-width="2.200" stroke-linecap="round"><path d="M1.500 1.500l15 15M16.500 1.500l-15 15"></path></svg>
<div class="a" style="left:1870px;top:905px;width:468px;height:63px;border:2px solid #cfd3da;border-radius:8px"></div>
<div class="a" style="left:1870px;top:1028px;width:468px;height:63px;border:2px solid #cfd3da;border-radius:8px"></div>
<!--COMBO_END-->
<!-- ================= MODAL ================= -->
<div class="a" style="left:0;top:0;z-index:20">
<div id="modal" class="a" style="z-index:auto"></div>
<div class="a" style="left: 431px; top: 264px; height: 48px; line-height: 48px; font-size: 34px; font-weight: bold; color: rgb(17,17,17);">竞猜设置</div>
<svg style="left:2235px;top:276px" width="21" height="21" viewBox="0 0 21 21" fill="none" stroke="#111" stroke-width="3" stroke-linecap="round"><path d="M2 2l17 17M19 2L2 19"></path></svg>
<div class="a t28" style="left: 430px; top: 345px; color: rgb(47,98,240);">规则设置</div>
<div class="a t28" style="left: 582.5px; top: 345px; color: rgb(31,31,31);">参与限制</div>
<div class="a t28" style="left: 735px; top: 345px; color: rgb(31,31,31);">奖品设置</div>
<div class="a t28" style="left: 887px; top: 345px; color: rgb(31,31,31);">发奖设置</div>
<div class="a" style="left:398px;top:409px;width:1920px;height:2px;background:#efefef"></div>
<div class="a" style="left:430px;top:407px;width:112px;height:4px;background:#2f62f0"></div>

<!-- row 1 -->
<div class="a lb" style="left: 398px; top: 455.5px; color: rgb(31,31,31);">猜中通知</div>
<div class="a cb" style="left:817px;top:459px"></div>
<div class="a t28" style="left: 865px; top: 455.5px; color: rgb(31,31,31);">开启</div>
<div class="a sel" style="left:957px;top:443px;width:900px;height:64px"></div>
<div class="a ph" style="left: 981px; top: 455.5px; color: rgb(189,189,189);">请选择猜中通知模板</div>
<svg class="chev" style="left:1813px;top:468.5px" width="20" height="13" viewBox="0 0 20 13"><path d="M1 1l9 11 9-11"></path></svg>
<!-- row 2 -->
<div class="a lb" style="left: 398px; top: 567.5px; color: rgb(31,31,31);">未猜中通知</div>
<div class="a cb" style="left:817px;top:571px"></div>
<div class="a t28" style="left: 865px; top: 567.5px; color: rgb(31,31,31);">开启</div>
<div class="a sel" style="left:957px;top:555px;width:900px;height:64px"></div>
<div class="a ph" style="left: 981px; top: 567.5px; color: rgb(189,189,189);">请选择未猜中通知模板</div>
<svg class="chev" style="left:1813px;top:580.5px" width="20" height="13" viewBox="0 0 20 13"><path d="M1 1l9 11 9-11"></path></svg>
<!-- row 3 -->
<div class="a lb" style="left: 398px; top: 679px; color: rgb(31,31,31);">开奖提醒接收人</div>
<div class="a cb" style="left:817px;top:680px"></div>
<div class="a t28" style="left: 865px; top: 676.5px; color: rgb(31,31,31);">开启</div>
<div class="a sel" style="left:957px;top:667px;width:760px;height:64px;border-radius:6px"></div>
<div class="a ph" style="left: 981px; top: 679px; font-size: 24px; color: rgb(189,189,189);">请输入手机号</div>
<!-- row 4 -->
<div class="a lb" style="left: 398px; top: 791px; color: rgb(31,31,31);">开启奖励</div>
<div class="a" style="left:817px;top:795px;width:32px;height:32px;border-radius:16px;background:#2f62f0"></div>
<div class="a" style="left:827px;top:805px;width:12px;height:12px;border-radius:6px;background:#fff"></div>
<div class="a t28" style="left: 865px; top: 791px; color: rgb(31,31,31);">是</div>
<div class="a" style="left:925px;top:795px;width:32px;height:32px;border-radius:16px;border:2px solid #d6d6d6;background:#fff"></div>
<div class="a t28" style="left: 973px; top: 791px; color: rgb(31,31,31);">否</div>
<!-- row 5 -->
<div class="a lb" style="left: 398px; top: 903px; color: rgb(31,31,31);">位置数量</div>
<div class="a sel" style="left:817px;top:891px;width:1082px;height:64px;background:#fff"></div>
<div class="a t28" style="left:841.500px;top:903px">9</div>
<!-- row 6 -->
<div class="a lb" style="left: 398px; top: 1015px; color: rgb(31,31,31);">中奖位置</div>
<div class="a sel" style="left:817px;top:1003px;width:451px;height:64px;background:#fff;border-radius:6px"></div>
<div class="a t28" style="left: 840px; top: 1015.5px; color: rgb(31,31,31);">中奖位置</div>
<div class="a sel" style="left:1313px;top:1003px;width:451px;height:64px;background:#fff;border-color:#4173ec;box-shadow:0 0 0 4px rgba(47,98,240,.10)"></div>
<div class="a ph" style="left: 1336.5px; top: 1014px; color: rgb(189,189,189);">暂不选择，手动开奖</div>
<svg class="chev" style="left:1720px;top:1028.5px" width="20" height="13" viewBox="0 0 20 13"><path d="M1 1l9 11 9-11"></path></svg>
<div class="a" style="left:1810px;top:1019.600px;width:26px;height:26px;border-radius:13px;background:#cacaca"></div>
<svg style="left:1817.500px;top:1027px" width="11" height="11" viewBox="0 0 11 11" fill="none" stroke="#fff" stroke-width="2.600" stroke-linecap="round"><path d="M1.800 1.800l7.400 7.400M9.200 1.800L1.800 9.200"></path></svg>
<!-- add -->
<div class="a c" style="left: 817px; top: 1127px; width: 127px; height: 64px; line-height: 68px; border-radius: 12px; background: rgb(47, 95, 243); color: rgb(255,255,255); font-size: 28px; box-shadow: rgba(47, 98, 240, 0.1) 0px 3px 0px;">添 加</div>
<!-- footer -->
<div class="a c" style="left: 1894px; top: 1331px; width: 128px; height: 64px; line-height: 64px; border-radius: 12px; border: 2px solid rgb(215, 215, 215); background: rgb(255, 255, 255); color: rgb(31,31,31); font-size: 28px; box-shadow: rgba(0, 0, 0, 0.03) 0px 3px 0px;">关 闭</div>
<div class="a c" style="left: 2054px; top: 1331px; width: 176px; height: 64px; line-height: 68px; border-radius: 12px; background: rgb(47, 95, 243); color: rgb(255,255,255); font-size: 28px; box-shadow: rgba(47, 98, 240, 0.1) 0px 3px 0px;">保存配置</div>
</div>
<!--MODAL_END-->
<!-- ================= DROPDOWN ================= -->
<div id="dd" class="a">
<div class="a" style="left:8px;top:8px;width:434px;height:64px;border-radius:8px;background:#e7f1fe"></div>
<div class="a di" style="top: 19.5px; font-weight: bold; color: rgb(26,26,26);">暂不选择，手动开奖</div>
<div class="a di" style="top: 84.4px; color: rgb(31,31,31);">位置 1</div><div class="a di" style="top: 148.5px; color: rgb(31,31,31);">位置 2</div><div class="a di" style="top: 212.3px; color: rgb(31,31,31);">位置 3</div><div class="a di" style="top: 276.2px; color: rgb(31,31,31);">位置 4</div><div class="a di" style="top: 340.2px; color: rgb(31,31,31);">位置 5</div><div class="a di" style="top: 404.3px; color: rgb(31,31,31);">位置 6</div><div class="a di" style="top: 468.3px; color: rgb(31,31,31);">位置 7</div>
<div class="a" style="left:428.300px;top:8px;width:15.300px;height:160px;border-radius:8px;background:rgba(0,0,0,.5)"></div>
</div>
<!--DROPDOWN_END-->


</body></html>
